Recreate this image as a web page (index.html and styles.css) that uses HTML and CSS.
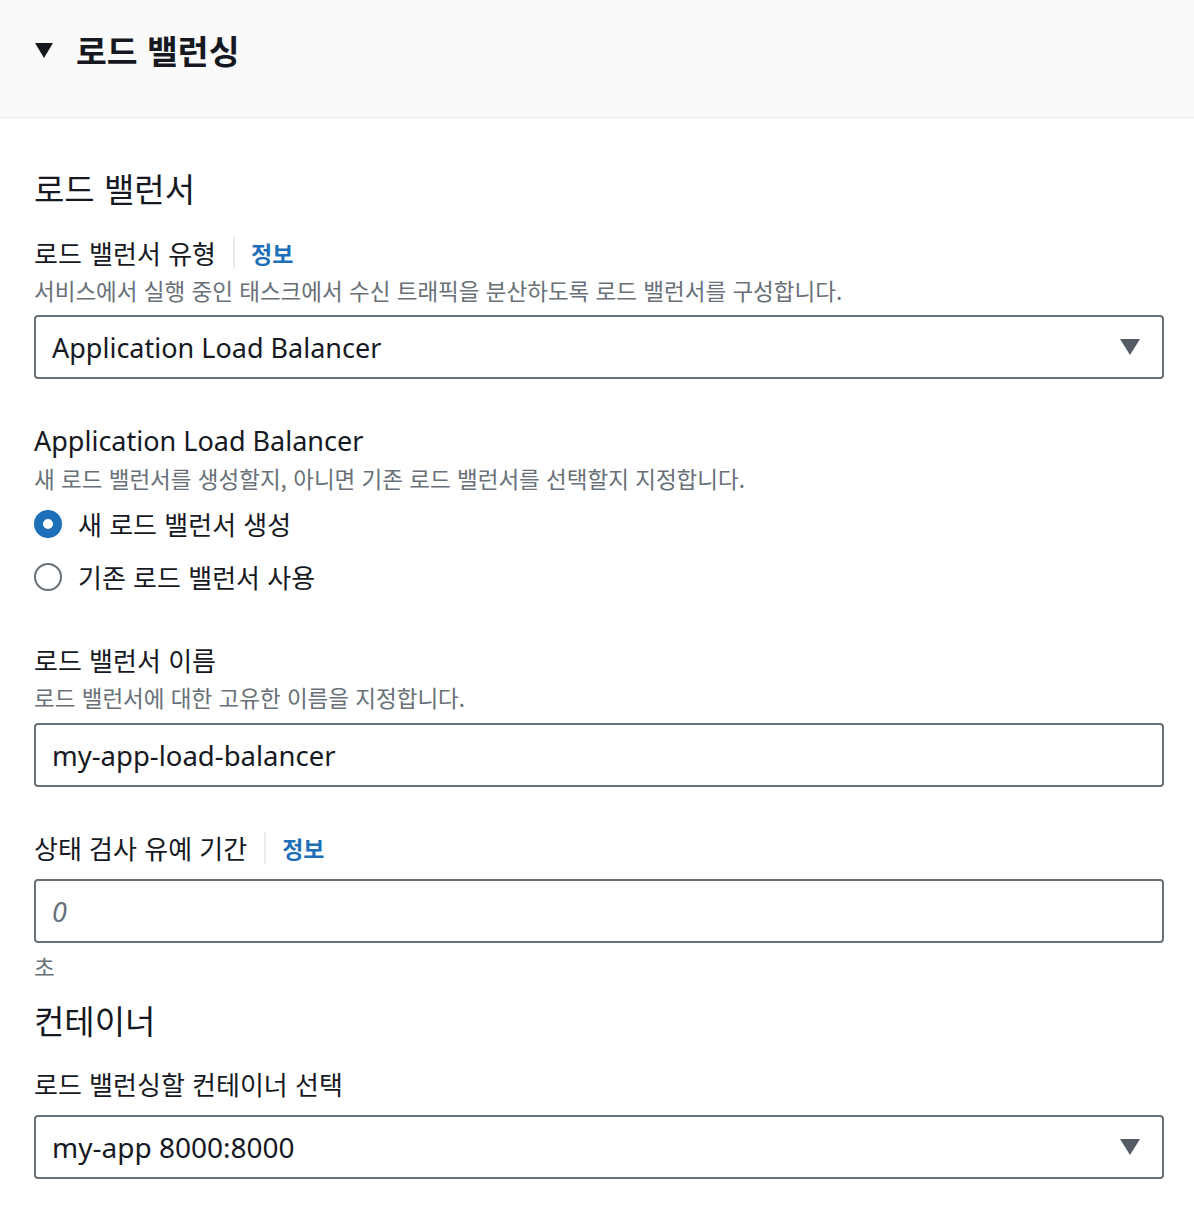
FILE: index.html
```html
<!DOCTYPE html>
<html lang="ko">
<head>
<meta charset="utf-8">
<link rel="stylesheet" href="styles.css">
</head>
<body>
<div class="header">
  <svg class="caret" width="18" height="15" viewBox="0 0 18 15"><path d="M0 0 H18 L9 15 Z" fill="#16191f"/></svg>
  <h2 class="header-title ko">로드 밸런싱</h2>
</div>
<div class="content">
  <h3 class="section-title ko">로드 밸런서</h3>

  <div class="label-row first">
    <span class="label ko">로드 밸런서 유형</span>
    <span class="sep"></span>
    <span class="info ko">정보</span>
  </div>
  <div class="desc ko">서비스에서 실행 중인 태스크에서 수신 트래픽을 분산하도록 로드 밸런서를 구성합니다.</div>
  <div class="select box">
    <span class="value alb-value">Application Load Balancer</span>
    <svg class="select-caret" width="20" height="16" viewBox="0 0 20 16"><path d="M0 0 H20 L10 16 Z" fill="#545b64"/></svg>
  </div>

  <div class="label-row alb">
    <span class="label latin">Application Load Balancer</span>
  </div>
  <div class="desc ko">새 로드 밸런서를 생성할지, 아니면 기존 로드 밸런서를 선택할지 지정합니다.</div>
  <div class="radio-row">
    <span class="radio checked"></span>
    <span class="radio-label ko">새 로드 밸런서 생성</span>
  </div>
  <div class="radio-row">
    <span class="radio"></span>
    <span class="radio-label ko">기존 로드 밸런서 사용</span>
  </div>

  <div class="label-row name">
    <span class="label ko">로드 밸런서 이름</span>
  </div>
  <div class="desc ko">로드 밸런서에 대한 고유한 이름을 지정합니다.</div>
  <div class="input box">
    <span class="value">my-app-load-balancer</span>
  </div>

  <div class="label-row grace">
    <span class="label ko">상태 검사 유예 기간</span>
    <span class="sep"></span>
    <span class="info ko">정보</span>
  </div>
  <div class="input box after-label">
    <span class="placeholder">0</span>
  </div>
  <div class="unit ko">초</div>

  <h3 class="section-title ko container-title">컨테이너</h3>
  <div class="label-row container-label">
    <span class="label ko">로드 밸런싱할 컨테이너 선택</span>
  </div>
  <div class="select box after-label">
    <span class="value port-value">my-app 8000:8000</span>
    <svg class="select-caret" width="20" height="16" viewBox="0 0 20 16"><path d="M0 0 H20 L10 16 Z" fill="#545b64"/></svg>
  </div>
</div>
</body>
</html>
```

FILE: styles.css
```css
* { box-sizing: border-box; }
body {
  margin: 0;
  background: #ffffff;
  color: #16191f;
  font-family: "Noto Sans", "Noto Sans CJK KR", sans-serif;
}
.ko {
  font-family: "Noto Sans CJK KR", "Noto Sans", sans-serif;
}
.header {
  height: 118px;
  background: #fafafa;
  border-bottom: 1px solid #e9ebed;
  display: flex;
  align-items: flex-start;
  padding: 28px 0 0 35px;
  gap: 23px;
}
.caret { margin-top: 15px; flex: none; }
.header-title {
  margin: 0;
  font-size: 33.5px;
  font-weight: 700;
  line-height: 44px;
}
.content {
  padding: 0 30px 40px 34px;
}
.section-title {
  margin: 48px 0 0;
  font-size: 33px;
  font-weight: 400;
  line-height: 44px;
}
.label-row {
  display: flex;
  align-items: center;
  height: 36px;
}
.label-row.first { margin-top: 25px; }
.label-row.alb { margin-top: 44px; }
.label-row.name { margin-top: 39px; }
.label-row.grace { margin-top: 43px; }
.label-row.container-label { margin-top: 24px; }
.label {
  font-size: 26px;
  line-height: 36px;
}
.label.latin {
  font-size: 27px;
}
.sep {
  width: 2px;
  height: 32px;
  background: #e9ebed;
  margin: 0 16px 0 17px;
}
.info {
  font-size: 23px;
  font-weight: 700;
  color: #1d6fb8;
}
.desc {
  font-size: 22.5px;
  line-height: 38px;
  color: #687078;
}
.box {
  height: 64px;
  border: 2px solid #687078;
  border-radius: 4px;
  display: flex;
  align-items: center;
  padding: 0 22px 0 16px;
  margin-top: 6px;
  background: #fff;
}
.box.after-label { margin-top: 13px; }
.input.box { margin-top: 7px; }
.input.box.after-label { margin-top: 13px; }
.value {
  font-size: 27.5px;
  flex: 1;
}
.value.alb-value { font-size: 27px; }
.value.port-value { font-size: 28px; }
.placeholder {
  font-size: 27px;
  font-style: italic;
  color: #687078;
}
.select-caret { flex: none; }
.radio-row {
  display: flex;
  align-items: center;
  height: 53px;
}
.radio {
  width: 28px;
  height: 28px;
  border-radius: 50%;
  border: 2px solid #687078;
  background: #fff;
  flex: none;
}
.radio.checked {
  border: 9px solid #1d6fb8;
  background: #fff;
}
.radio-label {
  margin-left: 16px;
  font-size: 26px;
}
.unit {
  margin-top: 8px;
  font-size: 22.5px;
  line-height: 30px;
  color: #687078;
}
.container-title { margin-top: 17px; }
```
